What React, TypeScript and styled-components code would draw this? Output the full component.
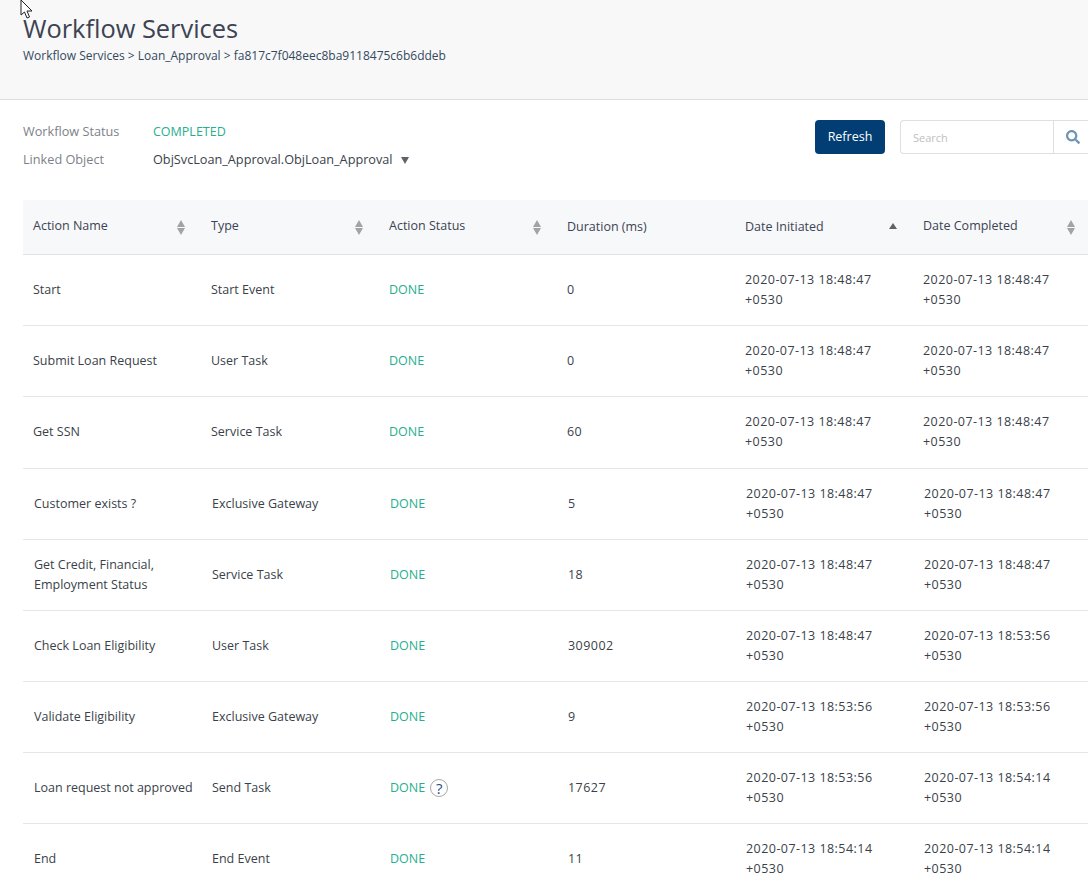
import styled, { createGlobalStyle } from "styled-components";
import { FaSearch } from "react-icons/fa";

type Row = {
    name: string[],
    type: string,
    duration: string,
    initiated: string,
    completed: string,
    help?: boolean,
    height: number,
    shift: number
}

const rows: Row[] = [
    { name: ["Start"], type: "Start Event", duration: "0", initiated: "18:48:47", completed: "18:48:47", height: 71, shift: 0 },
    { name: ["Submit Loan Request"], type: "User Task", duration: "0", initiated: "18:48:47", completed: "18:48:47", height: 71, shift: 0 },
    { name: ["Get SSN"], type: "Service Task", duration: "60", initiated: "18:48:47", completed: "18:48:47", height: 72, shift: 0 },
    { name: ["Customer exists ?"], type: "Exclusive Gateway", duration: "5", initiated: "18:48:47", completed: "18:48:47", height: 71, shift: 1 },
    { name: ["Get Credit, Financial,", "Employment Status"], type: "Service Task", duration: "18", initiated: "18:48:47", completed: "18:48:47", height: 71, shift: 1 },
    { name: ["Check Loan Eligibility"], type: "User Task", duration: "309002", initiated: "18:48:47", completed: "18:53:56", height: 71, shift: 1 },
    { name: ["Validate Eligibility"], type: "Exclusive Gateway", duration: "9", initiated: "18:53:56", completed: "18:53:56", height: 71, shift: 1 },
    { name: ["Loan request not approved"], type: "Send Task", duration: "17627", initiated: "18:53:56", completed: "18:54:14", help: true, height: 71, shift: 1 },
    { name: ["End"], type: "End Event", duration: "11", initiated: "18:54:14", completed: "18:54:14", height: 71, shift: 1 },
]

const headers: { label: string, sort: "both" | "up" | "none" }[] = [
    { label: "Action Name", sort: "both" },
    { label: "Type", sort: "both" },
    { label: "Action Status", sort: "both" },
    { label: "Duration (ms)", sort: "none" },
    { label: "Date Initiated", sort: "up" },
    { label: "Date Completed", sort: "both" },
]

const GlobalStyle = createGlobalStyle`
    html, body {
        margin: 0;
        height: 888px;
        overflow: hidden;
        background: #ffffff;
    }

    * {
        box-sizing: border-box;
        font-family: "Open Sans", "Noto Sans", sans-serif;
    }
`

const Page = styled.div`
    width: 1088px;
    height: 888px;
    overflow: hidden;
    position: relative;
`

const Banner = styled.header`
    height: 100px;
    background-color: #f8f8f8;
    border-bottom: 1px solid #dedede;
    padding: 11px 23px 0;
`

const Title = styled.h1`
    margin: 0;
    font-size: 25.4px;
    line-height: 34px;
    font-weight: 400;
    color: #3c4353;
`

const Breadcrumb = styled.div`
    margin-top: 2px;
    font-size: 12px;
    line-height: 18px;
    color: #34495e;
`

const Summary = styled.section`
    height: 100px;
    padding: 20px 0 0 23px;
    display: flex;
    justify-content: space-between;
    align-items: flex-start;
`

const SummaryGrid = styled.div`
    display: grid;
    grid-template-columns: 130px auto;
    grid-auto-rows: 28px;
    align-items: center;
    margin-top: -3px;
`

const SummaryLabel = styled.span`
    font-size: 12.7px;
    color: #7d8288;
`

const CompletedValue = styled.span`
    font-size: 12.5px;
    color: #27ae8f;
    padding-top: 1px;
`

const LinkedValue = styled.span`
    font-size: 12.7px;
    color: #3a3f4a;
    display: flex;
    align-items: center;
    gap: 8px;
`

const Caret = styled.i`
    width: 0;
    height: 0;
    border-left: 4.5px solid transparent;
    border-right: 4.5px solid transparent;
    border-top: 7px solid #5f6368;
    margin-top: 2px;
`

const Tools = styled.div`
    display: flex;
    align-items: center;
    gap: 15px;
`

const RefreshButton = styled.button`
    width: 70px;
    height: 34px;
    padding: 0 0 2px;
    border: none;
    border-radius: 4px;
    background-color: #023e73;
    color: #ffffff;
    font-size: 12.5px;
`

const SearchBox = styled.div`
    width: 188px;
    height: 34px;
    border: 1px solid #dfdfdf;
    border-right: none;
    border-radius: 4px 0 0 4px;
    display: flex;
    align-items: stretch;
`

const SearchText = styled.span`
    flex: 1;
    padding-left: 12px;
    font-size: 11px;
    line-height: 33px;
    color: #c0c0c0;
`

const SearchButton = styled.span`
    width: 35px;
    padding-left: 4px;
    border-left: 1px solid #dfdfdf;
    display: flex;
    align-items: center;
    justify-content: center;
    color: #6f95b5;
    font-size: 14px;
`

const Table = styled.section`
    margin-left: 23px;
    width: 1078px;
`

const HeaderRow = styled.div`
    height: 55px;
    background-color: #f7f8fa;
    border-bottom: 1px solid #e3e3e3;
    display: grid;
    grid-template-columns: repeat(6, 178px);
`

const HeaderCell = styled.div`
    padding: 0 16px 2px 10px;
    display: flex;
    justify-content: space-between;
    align-items: center;
    font-size: 12.5px;
    color: #3c4353;
`

const HeaderLabel = styled.span<{ $raised: boolean }>`
    margin-bottom: ${p => p.$raised ? 2 : 0}px;
`

const SortBoth = styled.span`
    width: 9px;
    height: 15px;
    margin: 3px -1px 0 0;
    display: flex;
    flex-direction: column;
    gap: 1px;

    &::before, &::after {
        content: "";
        width: 0;
        height: 0;
        border-left: 4.5px solid transparent;
        border-right: 4.5px solid transparent;
    }

    &::before {
        border-bottom: 7px solid #a3a3a3;
    }

    &::after {
        border-top: 7px solid #a3a3a3;
    }
`

const SortUp = styled.span`
    width: 0;
    height: 0;
    border-left: 4px solid transparent;
    border-right: 4px solid transparent;
    border-bottom: 6px solid #5f6368;
`

const BodyRow = styled.div<{ $height: number, $shift: number }>`
    height: ${p => p.$height}px;
    padding-left: ${p => p.$shift}px;
    padding-bottom: ${p => p.$height - 71}px;
    border-bottom: 1px solid #e6e6e6;
    display: grid;
    grid-template-columns: repeat(6, 178px);
    align-items: center;
`

const Cell = styled.div`
    padding: 0 10px;
    font-size: 12.5px;
    line-height: 20px;
    color: #3a3f4a;
    white-space: nowrap;
`

const NumberCell = styled(Cell)`
    letter-spacing: 0.45px;
`

const DoneCell = styled(Cell)`
    color: #27ae8f;
    display: flex;
    align-items: center;
    gap: 5px;
`

const HelpBadge = styled.span`
    width: 18px;
    height: 18px;
    border: 1.5px solid #a8a8a8;
    border-radius: 50%;
    display: flex;
    align-items: center;
    justify-content: center;
    font-size: 15px;
    color: #1d4f80;
`

const Cursor = styled.svg`
    position: absolute;
    left: 20px;
    top: 0;
`

const App = () => {
    return (
        <Page>
            <GlobalStyle />
            <Banner>
                <Title>Workflow Services</Title>
                <Breadcrumb>Workflow Services &gt; Loan_Approval &gt; fa817c7f048eec8ba9118475c6b6ddeb</Breadcrumb>
            </Banner>
            <Summary>
                <SummaryGrid>
                    <SummaryLabel>Workflow Status</SummaryLabel>
                    <CompletedValue>COMPLETED</CompletedValue>
                    <SummaryLabel>Linked Object</SummaryLabel>
                    <LinkedValue>ObjSvcLoan_Approval.ObjLoan_Approval <Caret /></LinkedValue>
                </SummaryGrid>
                <Tools>
                    <RefreshButton>Refresh</RefreshButton>
                    <SearchBox>
                        <SearchText>Search</SearchText>
                        <SearchButton><FaSearch /></SearchButton>
                    </SearchBox>
                </Tools>
            </Summary>
            <Table>
                <HeaderRow>
                    {headers.map(h => (
                        <HeaderCell key={h.label}>
                            <HeaderLabel $raised={h.sort === "both"}>{h.label}</HeaderLabel>
                            {h.sort === "both" && <SortBoth />}
                            {h.sort === "up" && <SortUp />}
                        </HeaderCell>
                    ))}
                </HeaderRow>
                {rows.map(r => (
                    <BodyRow key={r.name[0]} $height={r.height} $shift={r.shift}>
                        <Cell>{r.name.map(n => <div key={n}>{n}</div>)}</Cell>
                        <Cell>{r.type}</Cell>
                        <DoneCell>DONE{r.help && <HelpBadge>?</HelpBadge>}</DoneCell>
                        <NumberCell>{r.duration}</NumberCell>
                        <NumberCell>2020-07-13 {r.initiated}<br />+0530</NumberCell>
                        <NumberCell>2020-07-13 {r.completed}<br />+0530</NumberCell>
                    </BodyRow>
                ))}
            </Table>
            <Cursor width="14" height="20" viewBox="0 0 14 20">
                <path d="M1 0 L1 15 L4.5 12 L7 18 L9.5 17 L7 11 L12 11 Z" fill="#ffffff" stroke="#222222" strokeWidth="1" />
            </Cursor>
        </Page>
    )
}

export default App;
